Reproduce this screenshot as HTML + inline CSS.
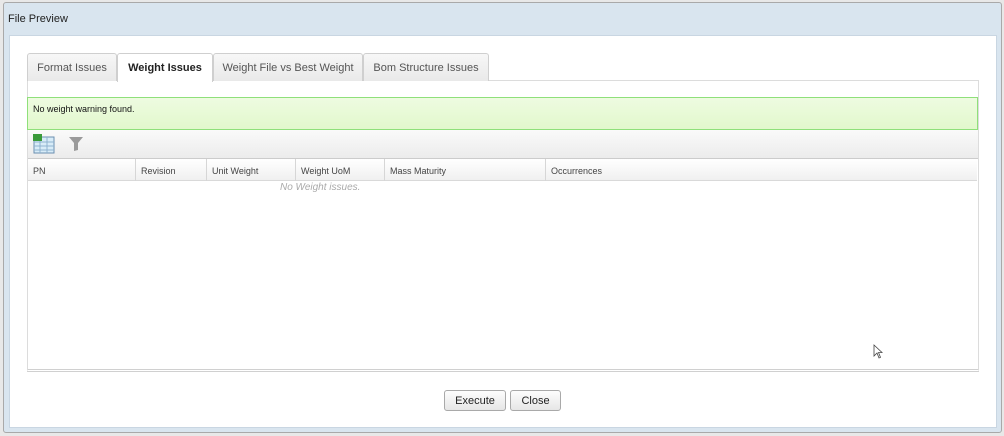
<!DOCTYPE html>
<html><head><style>
*{box-sizing:border-box;margin:0;padding:0}
body{width:1004px;height:436px;background:#e8e8e8;font-family:"Liberation Sans",Arial,sans-serif;position:relative;overflow:hidden}
.dlg{position:absolute;left:3px;top:2px;width:999px;height:431px;background:#d9e5ef;border:1px solid #a9a9a9;border-radius:3px}
.title{position:absolute;left:8px;top:13px;font-size:11px;color:#222}
.inner{position:absolute;left:9px;top:35px;width:988px;height:393px;background:#fff;border:1px solid #c9d6e2}
.tab{position:absolute;top:53px;height:28px;border:1px solid #cfcfcf;border-bottom:none;background:linear-gradient(#f7f7f7,#e9e9e9);font-size:11px;color:#555;text-align:center;line-height:28px;border-radius:3px 3px 0 0}
.tab.act{background:#fff;color:#222;font-weight:bold;height:29px}
.content{position:absolute;left:27px;top:80px;width:952px;height:292px;border:1px solid #dcdcdc;border-bottom:3px double #d0d0d0}
.green{position:absolute;left:27px;top:97px;width:951px;height:33px;background:linear-gradient(#eefbe1,#e2f8cc);border:1px solid #8fe07a;font-size:9px;color:#111;padding:6px 5px}
.tool{position:absolute;left:28px;top:130px;width:950px;height:29px;background:linear-gradient(#fafafa,#ececec);border-bottom:1px solid #ccc}
.hdr{position:absolute;left:28px;top:159px;width:949px;height:22px;background:linear-gradient(#fff,#f0f0f0);border-bottom:1px solid #d9d9d9;font-size:9px;color:#444}
.hdr span{position:absolute;top:0;height:22px;line-height:24px;padding-left:5px;border-right:1px solid #d6d6d6}
.empty{position:absolute;left:280px;top:182px;font-size:10px;font-style:italic;color:#aaa}
.btn{position:absolute;top:390px;height:21px;border:1px solid #a9a9a9;border-radius:3px;background:linear-gradient(#fdfdfd,#e6e6e6);font-size:11px;color:#222;text-align:center;line-height:20px}
</style></head><body>
<div class="dlg"></div>
<div class="title">File Preview</div>
<div class="inner"></div>
<div class="content"></div>
<div class="tab" style="left:27px;width:90px">Format Issues</div>
<div class="tab act" style="left:117px;width:96px">Weight Issues</div>
<div class="tab" style="left:213px;width:150px">Weight File vs Best Weight</div>
<div class="tab" style="left:363px;width:126px">Bom Structure Issues</div>
<div class="green">No weight warning found.</div>
<div class="tool">
<svg style="position:absolute;left:5px;top:4px" width="22" height="20" viewBox="0 0 22 20"><rect x="1" y="3" width="20" height="16" fill="#d8ecf8" stroke="#6b8fb0"/><g stroke="#8fb3d0" stroke-width="1"><line x1="1" y1="8" x2="21" y2="8"/><line x1="1" y1="12" x2="21" y2="12"/><line x1="1" y1="16" x2="21" y2="16"/><line x1="7" y1="3" x2="7" y2="19"/><line x1="14" y1="3" x2="14" y2="19"/></g><rect x="0" y="0" width="9" height="7" fill="#3a9a3a"/></svg>
<svg style="position:absolute;left:40px;top:6px" width="16" height="16" viewBox="0 0 16 16"><path d="M1 1H15L10 7V14L6 15V7Z" fill="#9a9a9a"/></svg>
</div>
<div class="hdr">
<span style="left:0;width:108px">PN</span>
<span style="left:108px;width:71px">Revision</span>
<span style="left:179px;width:89px">Unit Weight</span>
<span style="left:268px;width:89px">Weight UoM</span>
<span style="left:357px;width:161px">Mass Maturity</span>
<span style="left:518px;width:431px;border-right:none">Occurrences</span>
</div>
<div class="empty">No Weight issues.</div>
<div class="btn" style="left:444px;width:62px">Execute</div>
<div class="btn" style="left:510px;width:51px">Close</div>
<svg style="position:absolute;left:873px;top:344px" width="10" height="15" viewBox="0 0 10 15"><path d="M1 1V12L4 9L6 14L7.5 13.3L5.5 8.5H9Z" fill="#fff" stroke="#444" stroke-width="0.8"/></svg>
</body></html>
